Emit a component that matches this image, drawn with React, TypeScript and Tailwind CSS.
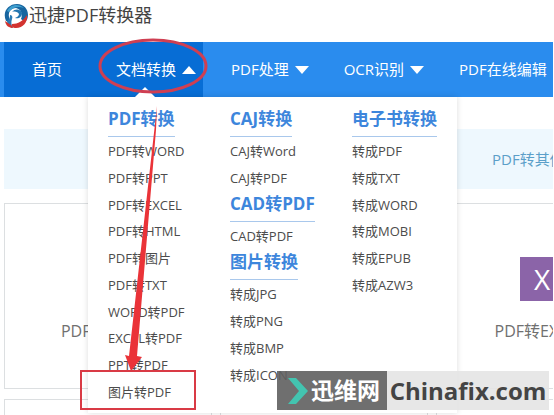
interface MenuGroup {
  title: string;
  links: string[];
}

const menuColumns: MenuGroup[][] = [
  [
    {
      title: 'PDF转换',
      links: [
        'PDF转WORD',
        'PDF转PPT',
        'PDF转EXCEL',
        'PDF转HTML',
        'PDF转图片',
        'PDF转TXT',
        'WORD转PDF',
        'EXCEL转PDF',
        'PPT转PDF',
        '图片转PDF',
      ],
    },
  ],
  [
    { title: 'CAJ转换', links: ['CAJ转Word', 'CAJ转PDF'] },
    { title: 'CAD转PDF', links: ['CAD转PDF'] },
    { title: '图片转换', links: ['转成JPG', '转成PNG', '转成BMP', '转成ICON'] },
  ],
  [
    {
      title: '电子书转换',
      links: ['转成PDF', '转成TXT', '转成WORD', '转成MOBI', '转成EPUB', '转成AZW3'],
    },
  ],
];

// list heights keep the rows of every column on the same rhythm
const listHeights: Record<number, string> = {
  1: 'h-[26px]',
  2: 'h-[53px]',
  4: 'h-[107px]',
  6: 'h-[160px]',
  10: 'h-[267px]',
};

const cards = [
  { title: 'PDF转WORD', letter: 'W', color: 'bg-[#3f7fc9]' },
  { title: 'PDF转PPT', letter: 'P', color: 'bg-[#d9694a]' },
  { title: 'PDF转EXCEL', letter: 'X', color: 'bg-[#8b64a8]' },
];

function Logo() {
  return (
    <svg viewBox="0 0 24 26" className="h-[26px] w-6 shrink-0" aria-hidden="true">
      <path d="M2 18C-2 9 4 1 13 1c7 0 11 5 11 11 0 3-1 5-3 7l-4-3c2-5 0-10-5-11-5 0-8 4-7 9l1 5z" fill="#17659f" />
      <path d="M3 8C6 1 15 0 20 5c-6-2-11-1-15 4z" fill="#3f9fcf" />
      <path d="M8 9c3-4 9-3 10 1 0 4-3 6-7 5 2-1 4-2 4-4-1-2-4-3-7-2z" fill="#2276b0" />
      <path d="M6 12c2 0 3 2 2 4-1 3-1 6 1 9-4-1-6-4-6-7 2-1 3-3 3-6z" fill="#2a7bb4" />
      <path d="M8 21c6 0 11-3 15-9 1 7-4 13-11 13-3 0-5-1-4-4z" fill="#d3332f" />
      <path d="M1 18l6 4 2 3c-4 0-7-2-8-7z" fill="#d3332f" />
    </svg>
  );
}

function Caret({ up = false }: { up?: boolean }) {
  return (
    <svg viewBox="0 0 14 8" className="h-2 w-3.5" aria-hidden="true">
      <path d={up ? 'M0 8L7 0l7 8z' : 'M0 0h14L7 8z'} fill="#fff" />
    </svg>
  );
}

function NavButton({ label, active = false }: { label: string; active?: boolean }) {
  return (
    <button
      type="button"
      aria-expanded={active}
      className={`flex shrink-0 items-center gap-1.5 pr-[7px] pl-7 ${active ? 'bg-[#076dd5]' : ''}`}
    >
      {label}
      <Caret up={active} />
    </button>
  );
}

function MegaMenu() {
  return (
    <div className="absolute top-full left-[88px] z-10 flex w-[369px] bg-white pt-[9px] pb-2 pl-5 shadow-[0_0_6px_rgba(0,0,0,0.14)]">
      <svg viewBox="0 0 20 10" className="absolute bottom-full left-[47px] h-2.5 w-5" aria-hidden="true">
        <path d="M0 10L10 0l10 10z" fill="#fff" />
      </svg>
      {menuColumns.map((groups, i) => (
        <div key={i} className="w-[122px] shrink-0">
          {groups.map((group) => (
            <section key={group.title}>
              <h2 className="mb-px w-fit border-b border-[#a9c8ec] pb-1 text-[17px] leading-[26px] font-bold text-[#3d86dc]">
                {group.title}
              </h2>
              <ul
                className={`grid auto-rows-fr items-center text-[13px] leading-5 text-[#4c4c4c] ${listHeights[group.links.length]}`}
              >
                {group.links.map((link) => (
                  <li key={link}>
                    <a href="#">{link}</a>
                  </li>
                ))}
              </ul>
            </section>
          ))}
        </div>
      ))}
    </div>
  );
}

function Annotations() {
  return (
    <svg
      width="554"
      height="415"
      viewBox="0 0 554 415"
      fill="none"
      className="pointer-events-none absolute top-0 left-0 z-20"
      aria-hidden="true"
    >
      <ellipse cx="153" cy="66" rx="53" ry="26" stroke="#cf3f52" strokeWidth="3" />
      <path d="M157 106l-1 24-19 226 5 1-11 14-6-16 4 1z" fill="#ea3338" />
      <rect x="81" y="371" width="114" height="38" stroke="#d93a45" strokeWidth="2" />
    </svg>
  );
}

function Watermark() {
  return (
    <div className="absolute right-[5px] bottom-[5px] z-30 flex h-[39px] leading-[39px] font-bold whitespace-nowrap">
      <div className="flex w-[110px] items-center gap-[3px] bg-[#5f5f5f]/90 pl-[11px] text-[23px] text-white">
        <svg viewBox="0 0 20 26" className="h-[26px] w-5 shrink-0" aria-hidden="true">
          <path d="M0 0h8l12 13L8 26H0l11-13z" fill="#43c4b0" />
        </svg>
        迅维网
      </div>
      <div className="w-[162px] bg-[#e4e4e4]/90 text-center text-[24px] text-[#444]">Chinafix.com</div>
    </div>
  );
}

export default function App() {
  return (
    <div className="relative h-screen overflow-hidden bg-white pr-px font-['Open_Sans','Noto_Sans_CJK_SC',sans-serif]">
      <header className="flex h-[42px] items-start gap-px pt-[3px] pl-1">
        <Logo />
        <h1 className="text-[18px] leading-6 text-[#444]">迅捷PDF转换器</h1>
      </header>

      <nav className="relative flex h-[55px] bg-[#2a8cee] pl-1 text-[15px] whitespace-nowrap text-white">
        <a href="#" className="flex shrink-0 items-center bg-[#076dd5] pr-[26px] pl-7">
          首页
        </a>
        <NavButton label="文档转换" active />
        <NavButton label="PDF处理" />
        <NavButton label="OCR识别" />
        <a href="#" className="flex shrink-0 items-center pl-7">
          PDF在线编辑
        </a>
        <MegaMenu />
      </nav>

      <main className="overflow-hidden pt-8 pl-1">
        <div className="flex h-[60px] items-center overflow-hidden bg-[#eef8fe] pl-[488px] text-[15px] whitespace-nowrap text-[#5b9fc9]">
          <a href="#">PDF转其他</a>
        </div>
        <div className="mt-3.5 grid grid-cols-[repeat(3,208px)] gap-x-2 gap-y-2.5">
          {cards.map((card) => (
            <article
              key={card.title}
              className="flex h-[186px] flex-col items-center border border-[#dcdfe1] pt-[53px]"
            >
              <div
                className={`flex h-11 w-10 items-center justify-center pl-1 text-[28px] text-white ${card.color}`}
              >
                {card.letter}
              </div>
              <h3 className="mt-[18px] text-base leading-6 text-[#707070]">{card.title}</h3>
            </article>
          ))}
          {cards.map((card) => (
            <div key={card.title} className="h-[186px] border border-[#dcdfe1]" />
          ))}
        </div>
      </main>

      <Annotations />
      <Watermark />
    </div>
  );
}
